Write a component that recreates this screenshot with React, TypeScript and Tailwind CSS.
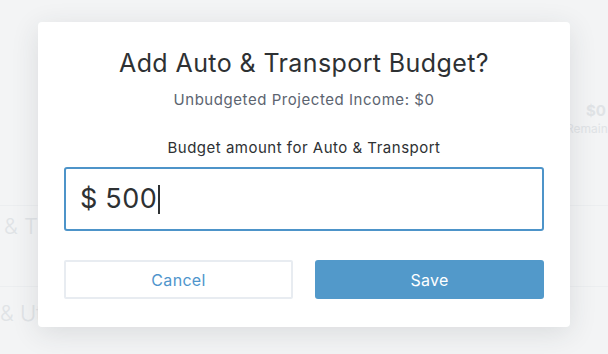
import React from 'react';

const font = { fontFamily: 'Inter, Lato, "Liberation Sans", sans-serif' };

export default function App() {
  const amount = '500';

  return (
    <div className="relative h-[354px] w-[608px] overflow-hidden bg-[#f3f4f5]" style={font}>
      {/* page behind the overlay */}
      <div className="flex h-full flex-col pt-[40px] text-[#e0e3e6]">
        <div className="flex h-[166px] items-start justify-end border-b border-[#eceef0] pt-[62px]">
          <div className="flex w-[22px] flex-col items-start text-[15px] leading-[18px]">
            <span className="font-bold">$0</span>
            <span className="-ml-[20px] text-[12px]">Remain</span>
          </div>
        </div>
        <div className="h-[81px] border-b border-[#eceef0] pl-[4px] pt-[6px] text-[22px] font-light leading-[28px]">& T</div>
        <div className="pt-[12px] text-[22px] font-light leading-[28px]">& Ut</div>
      </div>

      {/* modal */}
      <div className="absolute left-[38px] top-[22px] flex h-[305px] w-[532px] flex-col items-center rounded-[4px] bg-white px-[26px] shadow-[0_6px_28px_rgba(40,50,60,0.12)]">
        <h2 className="mt-[25px] text-[25px] leading-[32px] tracking-[0.4px] text-[#2e3133]">Add Auto &amp; Transport Budget?</h2>
        <p className="mt-[12px] text-[15px] leading-[18px] tracking-[0.55px] text-[#5c6470]">Unbudgeted Projected Income: $0</p>
        <label className="mt-[30px] text-[15px] leading-[18px] tracking-[0.5px] text-[#2e3133]">Budget amount for Auto &amp; Transport</label>
        <div className="mt-[10px] flex h-[64px] w-[480px] items-center rounded-[3px] border-2 border-[#4d94c9] px-[14px] text-[27px] text-[#2e3133]">
          <span>$</span>
          <span className="ml-[8px] tracking-[0.5px]">{amount}</span>
          <span className="ml-[1px] h-[29px] w-[2px] bg-[#2e3133]" />
        </div>
        <div className="mt-[29px] flex w-[480px] justify-between">
          <button className="h-[39px] w-[229px] rounded-[2px] border-2 border-[#e8ecf1] text-[16px] tracking-[0.3px] text-[#4f95cc]">Cancel</button>
          <button className="h-[39px] w-[229px] rounded-[3px] bg-[#5299ca] text-[16px] tracking-[0.3px] text-white">Save</button>
        </div>
      </div>
    </div>
  );
}
